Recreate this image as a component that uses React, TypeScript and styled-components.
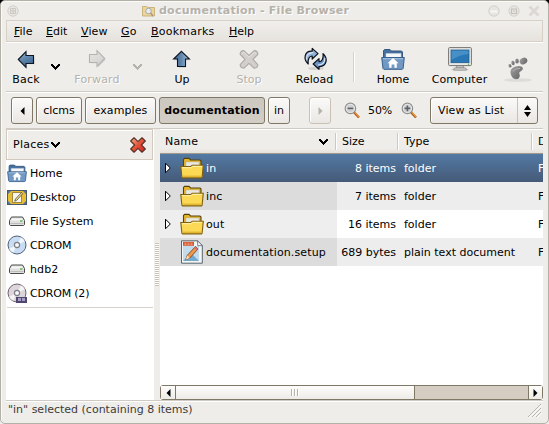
import React from "react";
import styled, { createGlobalStyle, css } from "styled-components";

const Global = createGlobalStyle`
  * { box-sizing: border-box; }
  body { margin: 0; background: linear-gradient(#000 50%, #efedea 50%) fixed; overflow: hidden; }
`;

const Window = styled.div`
  width: 549px;
  height: 424px;
  display: flex;
  flex-direction: column;
  padding: 0 5px;
  background: #efedea;
  border: 1px solid #b3b0a8;
  border-radius: 5px;
  box-shadow: inset 1px 1px 0 #fbfaf8;
  font: 11px/14px "DejaVu Sans", sans-serif;
  color: #000;
  white-space: nowrap;
  cursor: default;
`;

const Label = styled.span<{ $track?: number; $dim?: boolean; $bold?: boolean; $drop?: number }>`
  display: block;
  padding-top: ${(p) => p.$drop ?? 0}px;
  letter-spacing: ${(p) => p.$track ?? 0}px;
  ${(p) => p.$bold && css`font-weight: bold;`}
  ${(p) => p.$dim && css`color: #b5b2aa; text-shadow: 1px 1px 0 #fff;`}
`;

const TitleBar = styled.header`
  flex: 0 0 19px;
  display: flex;
  align-items: center;
  padding: 0 3px 0 1px;
`;
const TitleCaption = styled.div`
  flex: 1;
  display: flex;
  align-items: center;
  gap: 4px;
  padding-left: 123px;
`;
const WindowButtons = styled.div`
  display: flex;
  gap: 8px;
`;

const MenuBar = styled.nav`
  flex: 0 0 22px;
  display: flex;
  align-items: center;
  padding: 2px 0 0 7px;
  border: 1px solid #d6d0c6;
  background: linear-gradient(#f1efec, #e6e3de);
`;
const MenuItem = styled.span<{ $width: number; $track?: number }>`
  display: block;
  width: ${(p) => p.$width}px;
  letter-spacing: ${(p) => p.$track ?? 0}px;
  &::first-letter { text-decoration: underline; text-underline-offset: 1px; }
`;

const Toolbar = styled.div`
  flex: 0 0 50px;
  display: grid;
  grid-template-columns: 40px 19px 64px 16px 74px 60px 71px 8px 70px 63px 52px;
  border-top: 1px solid #fff;
  border-bottom: 1px solid #cfcbc4;
`;
const ToolItem = styled.div`
  display: flex;
  flex-direction: column;
  align-items: center;
  padding-top: 4px;
  gap: 2px;
  svg { display: block; flex: none; }
`;
const ToolArrow = styled.div`
  display: flex;
  justify-content: center;
  padding-top: 21px;
`;
const ToolRule = styled.div`
  width: 2px;
  height: 30px;
  margin: 9px 0 0 3px;
  background: #d5d1ca;
  border-right: 1px solid #fff;
`;
const Foot = styled.div`
  padding: 13px 0 0 11px;
`;

const LocationBar = styled.div`
  flex: 0 0 37px;
  display: flex;
  align-items: flex-start;
  gap: 3px;
  padding: 4px 0 0 5px;
  border-top: 1px solid #fff;
  border-bottom: 1px solid #cfcbc4;
`;
const PathButton = styled.button<{ $width: number; $active?: boolean; $faded?: boolean }>`
  width: ${(p) => p.$width}px;
  height: 27px;
  display: flex;
  align-items: center;
  justify-content: center;
  padding: 0;
  font: inherit;
  color: inherit;
  border: 1px solid ${(p) => (p.$faded ? "#c9c1b6" : "#7f7866")};
  border-radius: 3px;
  background: ${(p) => (p.$active ? "linear-gradient(#cdc8bf, #d3cec5)" : "linear-gradient(#fbfaf9, #eae7e3)")};
  box-shadow: ${(p) => (p.$active ? "none" : "inset 1px 1px 0 #fff")};
`;
const NextButton = styled(PathButton)`
  margin-left: 16px;
`;
const ZoomGroup = styled.div`
  height: 27px;
  display: grid;
  grid-template-columns: 24px 33px 20px;
  align-items: center;
  margin-left: 10px;
`;
const Combo = styled.div`
  width: 108px;
  height: 27px;
  display: grid;
  grid-template-columns: 1fr 20px;
  align-items: center;
  margin-left: 6px;
  padding-left: 7px;
  border: 1px solid #7f7866;
  border-radius: 3px;
  background: linear-gradient(#fbfaf9, #eae7e3);
  box-shadow: inset 1px 1px 0 #fff;
`;
const ComboArrows = styled.div`
  height: 25px;
  display: flex;
  align-items: center;
  justify-content: center;
  border-left: 1px solid #c9c1b6;
`;

const Body = styled.main`
  flex: 0 0 272px;
  display: grid;
  grid-template-columns: 148px 6px 383px;
  border-bottom: 1px solid #cfcbc4;
`;
const Sidebar = styled.aside`
  background: #fff;
`;
const SidebarHeader = styled.div`
  width: 147px;
  height: 31px;
  display: flex;
  align-items: center;
  gap: 2px;
  margin-bottom: 1px;
  padding: 1px 6px 0 6px;
  border: 1px solid #d2c9be;
  background: #efedea;
  box-shadow: inset 1px 1px 0 #fff;
  svg:last-child { margin-left: auto; }
`;
const Place = styled.div`
  height: 24px;
  display: grid;
  grid-template-columns: 22px 1fr;
  gap: 1px;
  align-items: center;
  padding-left: 1px;
  svg { display: block; }
`;
const PlaceRule = styled.div`
  height: 1px;
  margin: 2px 1px 0;
  background: #d6d1c8;
`;
const Splitter = styled.div`
  display: flex;
  align-items: center;
  padding: 0 1px;
`;
const Grip = styled.div`
  width: 4px;
  height: 43px;
  background: repeating-linear-gradient(#c9c1b6 0 1px, #fff 1px 2px);
`;

const FileList = styled.section`
  display: flex;
  flex-direction: column;
  overflow: hidden;
  background: #fff;
`;
const Columns = styled.div`
  display: grid;
  grid-template-columns: 177px 62px 134px 10px;
`;
const HeaderRow = styled(Columns)`
  height: 25px;
  border-top: 1px solid #fff;
  border-bottom: 1px solid #a09a8c;
  background: linear-gradient(#efedea 80%, #e4e1dc);
`;
const HeaderCell = styled.div<{ $last?: boolean }>`
  display: flex;
  align-items: center;
  justify-content: space-between;
  padding: 1px 9px 0 5px;
  overflow: hidden;
  background: ${(p) =>
    p.$last ? "none" : "linear-gradient(#cfc8be, #cfc8be) right 1px top 3px / 1px 17px no-repeat, linear-gradient(#fff, #fff) right 0 top 3px / 1px 17px no-repeat"};
`;
const FileRow = styled(Columns)<{ $tone: "selected" | "dark" | "light" }>`
  height: 28px;
  ${(p) => p.$tone === "selected" && css`background: linear-gradient(#5279a3, #465a78); color: #fff;`}
  ${(p) => p.$tone === "dark" && css`background: linear-gradient(90deg, #dcdcdc 177px, #ededed 177px);`}
  ${(p) => p.$tone === "light" && css`background: linear-gradient(90deg, #eeeeee 177px, #fff 177px);`}
`;
const NameCell = styled.div`
  display: grid;
  grid-template-columns: 14px 24px 1fr;
  align-items: center;
  gap: 2px;
  padding-left: 4px;
  svg { display: block; }
`;
const SizeCell = styled.div`
  display: flex;
  align-items: center;
  justify-content: flex-end;
  padding: 2px 3px 0 0;
`;
const TextCell = styled.div`
  display: flex;
  align-items: center;
  padding: 2px 0 0 5px;
  overflow: hidden;
`;

const ScrollBar = styled.div`
  height: 15px;
  margin-top: auto;
  display: grid;
  grid-template-columns: 14px 240px 1fr 14px;
  border: 1px solid #7f7866;
  border-radius: 3px;
  background: #d5ccc2;
`;
const ScrollPart = styled.div<{ $ends?: boolean; $last?: boolean }>`
  display: flex;
  align-items: center;
  justify-content: center;
  background: linear-gradient(#fdfdfb, #edebe7);
  ${(p) => p.$ends && css`border: solid #7f7866; border-width: 0 1px;`}
  ${(p) => p.$last && css`border-left: 1px solid #7f7866;`}
`;
const Trough = styled.div`
  background: #d5ccc2;
`;
const StatusBar = styled.footer`
  flex: 1;
  display: flex;
  justify-content: space-between;
  padding: 1px 1px 0 2px;
  border-top: 1px solid #fff;
  color: #3c3b39;
`;

function Chevron({ color = "#000" }: { color?: string }) {
  return (
    <svg width="9" height="6" viewBox="0 0 9 6" shapeRendering="crispEdges">
      <path d="M0 0h2v1h1v1h1v1h1V2h1V1h1V0h2v2H8v1H7v1H6v1H5v1H4V5H3V4H2V3H1V2H0z" fill={color} />
    </svg>
  );
}

function Triangle({ side, color = "#000" }: { side: "left" | "right"; color?: string }) {
  return (
    <svg width="5" height="8" viewBox="0 0 5 8">
      <path d={side === "left" ? "M4.5 0v8L.5 4z" : "M.5 0v8l4-4z"} fill={color} />
    </svg>
  );
}

function BlueArrow({ kind }: { kind: "back" | "forward" | "up" }) {
  const turn = kind === "up" ? "rotate(90 12 12)" : kind === "forward" ? "rotate(180 12 12)" : undefined;
  const off = kind === "forward";
  return (
    <svg width="24" height="24" viewBox="0 0 24 24">
      <defs>
        <linearGradient id={"arrow-" + kind} x1="0" y1="0" x2={kind === "up" ? "0" : ".5"} y2="1">
          <stop offset="0" stopColor={off ? "#d0cfcd" : "#a9c3dc"} />
          <stop offset=".5" stopColor={off ? "#d9d8d6" : "#6288ae"} />
          <stop offset="1" stopColor={off ? "#e4e3e0" : "#3d6691"} />
        </linearGradient>
      </defs>
      <g transform="translate(1 1.3)" opacity=".5">
        <path d="M4.5 12.5l7.5-7.5V9h7.5v7H12v4z" fill="#b9b6b0" transform={turn} />
      </g>
      <path d="M4.3 12.5L12 4.6V8.5h7.5v8H12v3.9z" fill={`url(#arrow-${kind})`} stroke={off ? "#b5b3af" : "#0d1620"} strokeWidth="1.1" transform={turn} />
    </svg>
  );
}

function StopIcon() {
  return (
    <svg width="24" height="24" viewBox="0 0 24 24">
      <g transform="translate(1.2 1.6) scale(.9)">
        <path d="M6.2 2.2L12 7.6l5.8-5.4q4 .2 4 4.1L16.4 12l5.4 5.8q0 3.8-4 4L12 16.4l-5.8 5.4q-4-.2-4-4L7.6 12 2.2 6.3q0-3.9 4-4.1z" fill="#d3cfcc" stroke="#aeaaa6" strokeWidth="1.3" strokeLinejoin="round" />
        <path d="M4 6.2L6.2 4 12 9.4 17.8 4l2.2 2" fill="none" stroke="#e6e3e0" />
      </g>
    </svg>
  );
}

function ReloadIcon() {
  return (
    <svg width="24" height="24" viewBox="0 0 24 24">
      <ellipse cx="13" cy="21.5" rx="8" ry="1.6" fill="#d5d2cd" />
      {[0, 180].map((angle) => (
        <g key={angle} transform={`translate(.6 -.2) rotate(${angle} 12 12)`}>
          <path d="M4.6 17.2C-.6 12.6.6 3.8 8.6 4.3V1.6l5.8 5.2-5.8 5.4V9.2c-3-.2-4.6 3.4-4 8z" fill={angle ? "#6f95c4" : "#8fb0d8"} stroke="#0b1219" strokeWidth="1.2" strokeLinejoin="round" />
          <path d="M2.8 12.8C2.6 8.4 5 5.6 9.6 5.8" fill="none" stroke="#dce8f5" strokeWidth="1.1" />
        </g>
      ))}
    </svg>
  );
}

function HomeFolder({ size }: { size: number }) {
  return (
    <svg width={size} height={size} viewBox="0 0 24 24">
      <path d="M2.5 12V3.5l1-1H9l1.5 1.5h10l1 1V12z" fill="#456f9f" stroke="#36597f" />
      <path d="M5 6.5h15V12H5z" fill="#f6f7f8" stroke="#c4ced8" strokeWidth=".6" />
      <path d="M.7 10.5h22.6l-1.2 11-.8.8H2.8l-.8-.8z" fill="#7199c3" stroke="#365f8d" />
      <path d="M2 11.7h20" stroke="#a9c4e0" />
      <path d="M12 11l-5.5 5.2h1.7v4.6h2.4v-3.3h2.8v3.3h2.4v-4.6h1.7z" fill="#fff" />
    </svg>
  );
}

function ComputerIcon() {
  return (
    <svg width="24" height="24" viewBox="0 0 24 24">
      <ellipse cx="12" cy="22.4" rx="9" ry="1.4" fill="#cfccc8" />
      <path d="M9 18h6l1 3H8z" fill="#c6c6c4" stroke="#888886" strokeWidth=".7" />
      <path d="M6.5 21h11l1 2h-13z" fill="#e2e2e0" stroke="#868684" strokeWidth=".8" />
      <rect x=".6" y=".6" width="22.8" height="18" rx="1" fill="#e9e9e7" stroke="#747472" />
      <rect x="3" y="3" width="18" height="12.7" fill="#2878b6" stroke="#1f5b8c" strokeWidth=".8" />
      <path d="M3.5 3.5h17V7Q11 8 3.5 13z" fill="#5b9fd2" opacity=".6" />
      <circle cx="20.5" cy="17.2" r=".7" fill="#57b34a" />
    </svg>
  );
}

function FootIcon() {
  return (
    <svg width="32" height="28" viewBox="0 0 32 28">
      <defs>
        <linearGradient id="foot" x1="0" y1="0" x2="1" y2="1">
          <stop offset="0" stopColor="#a2a2a2" />
          <stop offset="1" stopColor="#606060" />
        </linearGradient>
      </defs>
      <ellipse cx="16" cy="24" rx="14" ry="1.8" fill="#dedcd9" />
      <g fill="url(#foot)">
        <ellipse cx="21.5" cy="5" rx="4" ry="3.1" transform="rotate(-30 21.5 5)" />
        <ellipse cx="15" cy="5" rx="1.8" ry="2.6" />
        <ellipse cx="11" cy="7" rx="1.6" ry="2.2" transform="rotate(-15 11 7)" />
        <ellipse cx="8" cy="9.8" rx="1.4" ry="1.8" transform="rotate(-25 8 9.8)" />
        <path d="M8.5 16c0-3.6 4-5.9 8.3-6 4.7 0 5.2 3.3 2.4 5.1-2 1.2-2.2 1.7-1.8 2.8.8 1.4.4 4.3-2.1 5.2C11.5 24 8.5 20 8.5 16z" />
      </g>
      <path d="M11 15.5c1-2.3 4-3 7-3" stroke="#b5b5b5" fill="none" />
    </svg>
  );
}

function Magnifier({ sign }: { sign: "+" | "-" }) {
  return (
    <svg width="17" height="17" viewBox="0 0 17 17">
      <path d="M10 10.2l5 5.3" stroke="#a8541c" strokeWidth="2.4" />
      <path d="M10.6 10.2l4.6 4.9" stroke="#f5a33d" strokeWidth="1.1" />
      <circle cx="6.4" cy="6.4" r="5.2" fill="#cfd1d4" stroke="#8d8d8a" strokeWidth="1.2" />
      <circle cx="6.4" cy="6.4" r="4.1" fill="none" stroke="#ececec" strokeWidth=".8" />
      <path d={sign === "+" ? "M3.6 6.4H9.200M6.4 3.6v5.6" : "M3.6 6.4h5.6"} stroke="#5d6266" strokeWidth="1.6" />
    </svg>
  );
}

function SpinArrows() {
  return (
    <svg width="7" height="12" viewBox="0 0 7 12">
      <path d="M0 5l3.5-5L7 5zM0 7l3.5 5L7 7z" />
    </svg>
  );
}

function CloseCross() {
  return (
    <svg width="16" height="16" viewBox="0 0 16 16">
      <defs>
        <linearGradient id="cross" x1="0" y1="0" x2="1" y2="1">
          <stop offset="0" stopColor="#f8b392" />
          <stop offset=".5" stopColor="#e4513a" />
          <stop offset="1" stopColor="#cf1f1f" />
        </linearGradient>
      </defs>
      <path d="M4 .8L8 4.6 12 .8 15.3 4 11.4 8l3.9 4L12 15.2l-4-3.8-4 3.8L.7 12l3.9-4L.7 4z" fill="url(#cross)" stroke="#5b3427" strokeWidth="1.2" strokeLinejoin="round" />
    </svg>
  );
}

function DesktopIcon() {
  return (
    <svg width="20" height="20" viewBox="0 0 20 20">
      <rect x=".5" y="3.5" width="19" height="14" fill="#e8bd35" stroke="#4b5a6b" />
      <path d="M1 4h3L1 7zM19 4h-3l3 3zM1 17h3l-3-3zM19 17h-3l3-3z" fill="#4a74a8" />
      <rect x="5.5" y="5.500" width="9" height="10" fill="#f6f5ef" stroke="#a38a3a" />
      <path d="M14.500 5.5l-6 6.5-.8 2.2 2-.9 6-6.600z" fill="#f6dd8a" stroke="#4f4a3a" strokeWidth=".8" />
    </svg>
  );
}

function DriveIcon() {
  return (
    <svg width="20" height="20" viewBox="0 0 20 20">
      <path d="M2.500 9.5l2-3.500h11l2 3.500v4.2l-1 .8h-13l-1-.8z" fill="#e0e0df" stroke="#4a4a49" strokeLinejoin="round" />
      <path d="M4 9.500l1.200-2h9.600l1.200 2z" fill="#f6f6f5" />
      <path d="M3.500 12.500h13" stroke="#bcbcba" />
      <rect x="13" y="9" width="2.5" height="2" fill="#83bf82" />
    </svg>
  );
}

function DiscIcon({ drive }: { drive?: boolean }) {
  return (
    <svg width="20" height="20" viewBox="0 0 20 20">
      <circle cx="10" cy="10" r="9" fill={drive ? "#dcd5dc" : "#c8dcf3"} stroke={drive ? "#6f6368" : "#4d6076"} />
      <path d="M10 10L14 2.300a8.500 8.500 0 0 1 4 4z" fill="#fff" opacity=".75" />
      <path d="M10 10L6 17.700a8.500 8.500 0 0 1-4-4z" fill="#fff" opacity=".75" />
      <circle cx="10" cy="10" r="2.6" fill="#eef0f2" stroke="#7d7f84" strokeWidth="1.1" />
      <circle cx="10" cy="10" r="1" fill="#fff" />
      {drive && (
        <g shapeRendering="crispEdges">
          <path d="M9 14h11v6H9z" fill="#50486c" />
          <path d="M11 15h3v3h-3zM15 15h3v3h-3z" fill="#a89fc6" />
        </g>
      )}
    </svg>
  );
}

function FolderIcon() {
  return (
    <svg width="24" height="24" viewBox="0 0 24 24">
      <path d="M3.5 12V3.5l1-1.1H9L10.500 4H20l1 1v7z" fill="#e5b428" stroke="#55430f" strokeWidth="1.1" />
      <path d="M6 6h13v6H6z" fill="#f8f8f6" stroke="#bcb48f" strokeWidth=".7" />
      <path d="M7 8h11M6 10h12" stroke="#d8d6cb" />
      <path d="M.8 10.500h10l1.500-1.300h11l-1.200 12-.6.700H2.600l-.7-.7z" fill="#fbd955" stroke="#806113" strokeWidth="1.1" />
      <path d="M2 11.700h9l1.500-1.300h9.500" stroke="#fff2a9" fill="none" />
      <path d="M2.600 20.300h18.800" stroke="#e3b532" strokeWidth="1.500" />
    </svg>
  );
}

function DocumentIcon() {
  return (
    <svg width="24" height="24" viewBox="0 0 24 24">
      <path d="M1.500.8h16l4.800 4.700v17.700H1.500z" fill="#f4f5f6" stroke="#59656f" />
      <path d="M3 6h16v15H3z" fill="#c3dced" />
      <path d="M3 21l8-8 8 8z" fill="#74a9d0" />
      <path d="M17.500.8l.3 4.900h4.500z" fill="#fff" stroke="#59656f" strokeWidth=".8" />
      <path d="M3 1.800h11v4H3z" fill="#d4562e" />
      <path d="M4.500 3.200h8M4.500 4.500h8" stroke="#f0b39c" strokeWidth=".7" strokeDasharray="2 1" />
      <path d="M15.500 6.500L7.200 15.500l-1.400 4.300 4-1.800 8.200-9z" fill="#f0984a" stroke="#7a4520" strokeWidth=".9" />
      <path d="M15.500 6.500l2.500 2.500-1.400 1.600-2.600-2.600z" fill="#d96d73" />
      <path d="M7.200 15.500l2.600 2.500-4 1.800z" fill="#f7e3c5" />
    </svg>
  );
}

function Expander() {
  return (
    <svg width="8" height="12" viewBox="0 0 8 12">
      <path d="M1.500 1.200v9.600L6.300 6z" fill="#fff" stroke="#000" strokeWidth="1" />
    </svg>
  );
}

function FinderIcon() {
  return (
    <svg width="13" height="12" viewBox="0 0 13 12">
      <path d="M.5 11V1.500h4L6 2.500h6.500V11z" fill="#ecd49a" stroke="#cbb47c" />
      <circle cx="6.500" cy="6" r="2.800" fill="#e9ecee" stroke="#a9aaa8" />
      <path d="M8.500 8l2.500 3" stroke="#aa9780" strokeWidth="1.400" />
    </svg>
  );
}

function WindowButton({ kind }: { kind: "menu" | "min" | "max" | "close" }) {
  return (
    <svg width="12" height="12" viewBox="0 0 12 12" fill="none" stroke="#d3d0cb">
      {kind !== "close" && <circle cx="6" cy="6" r="5.2" fill="#e8e6e2" />}
      {kind === "menu" && <path d="M3.500 3.500h5v5h-5zM6 3.500v5M3.500 6h5" stroke="#cbc8c2" />}
      {kind === "min" && <path d="M2.500 6.500h7" stroke="#f8f7f5" strokeWidth="2" />}
      {kind === "max" && <path d="M3.500 4h5v4.500h-5zM5 6h2" stroke="#c3c0ba" strokeWidth="1.200" />}
      {kind === "close" && <path d="M1.500 1.500l9 9M10.500 1.500l-9 9" strokeWidth="2.800" stroke="#dcd9d5" />}
    </svg>
  );
}

function Thumb() {
  return (
    <svg width="8" height="7" viewBox="0 0 8 7" shapeRendering="crispEdges">
      <path d="M0 0h1v7H0zM3 0h1v7H3zM6 0h1v7H6z" fill="#b9b2a6" />
      <path d="M1 0h1v7H1zM4 0h1v7H4zM7 0h1v7H7z" fill="#fff" />
    </svg>
  );
}

function ResizeGrip() {
  return (
    <svg width="15" height="15" viewBox="0 0 15 15">
      <path d="M1 14L14 1M5 14l9-9M9 14l5-5" stroke="#b9b5ad" />
      <path d="M2 14.700L14.700 2M6 14.700L14.700 6M10 14.700l4.700-4.700" stroke="#fff" />
    </svg>
  );
}

const menus = [
  { text: "File", width: 32, track: 0 },
  { text: "Edit", width: 35, track: 0 },
  { text: "View", width: 40, track: 0.1 },
  { text: "Go", width: 30, track: 0.1 },
  { text: "Bookmarks", width: 78, track: 0.22 },
  { text: "Help", width: 40, track: 0 },
];

const places = [
  { name: "Home", icon: <HomeFolder size={20} />, track: 0 },
  { name: "Desktop", icon: <DesktopIcon />, track: 0.05 },
  { name: "File System", icon: <DriveIcon />, track: 0.05 },
  { name: "CDROM", icon: <DiscIcon />, track: -0.1 },
  { name: "hdb2", icon: <DriveIcon />, track: 0.1 },
  { name: "CDROM (2)", icon: <DiscIcon drive />, track: -0.2 },
];

const files = [
  { name: "in", size: "8 items", type: "folder", tone: "selected" as const },
  { name: "inc", size: "7 items", type: "folder", tone: "dark" as const },
  { name: "out", size: "16 items", type: "folder", tone: "light" as const },
  { name: "documentation.setup", size: "689 bytes", type: "plain text document", tone: "dark" as const },
];

export default function App() {
  return (
    <>
      <Global />
      <Window>
        <TitleBar>
          <WindowButton kind="menu" />
          <TitleCaption>
            <FinderIcon />
            <Label $bold $dim $track={0.25}>documentation - File Browser</Label>
          </TitleCaption>
          <WindowButtons>
            <WindowButton kind="min" />
            <WindowButton kind="max" />
            <WindowButton kind="close" />
          </WindowButtons>
        </TitleBar>
        <MenuBar>
          {menus.map((m) => (
            <MenuItem key={m.text} $width={m.width} $track={m.track}>{m.text}</MenuItem>
          ))}
        </MenuBar>
        <Toolbar>
          <ToolItem><BlueArrow kind="back" /><Label $track={0.15}>Back</Label></ToolItem>
          <ToolArrow><Chevron /></ToolArrow>
          <ToolItem><BlueArrow kind="forward" /><Label $dim $track={0.15}>Forward</Label></ToolItem>
          <ToolArrow><Chevron color="#b5b2aa" /></ToolArrow>
          <ToolItem><BlueArrow kind="up" /><Label>Up</Label></ToolItem>
          <ToolItem><StopIcon /><Label $dim>Stop</Label></ToolItem>
          <ToolItem><ReloadIcon /><Label>Reload</Label></ToolItem>
          <ToolRule />
          <ToolItem><HomeFolder size={24} /><Label>Home</Label></ToolItem>
          <ToolItem><ComputerIcon /><Label $track={0.12}>Computer</Label></ToolItem>
          <Foot><FootIcon /></Foot>
        </Toolbar>
        <LocationBar>
          <PathButton $width={22}><Triangle side="left" /></PathButton>
          <PathButton $width={46}><Label>clcms</Label></PathButton>
          <PathButton $width={71}><Label $track={0.1}>examples</Label></PathButton>
          <PathButton $width={106} $active><Label $bold $track={0.15}>documentation</Label></PathButton>
          <PathButton $width={22}><Label>in</Label></PathButton>
          <NextButton $width={22} $faded><Triangle side="right" color="#b5b2aa" /></NextButton>
          <ZoomGroup>
            <Magnifier sign="-" />
            <Label $track={-0.1}>50%</Label>
            <Magnifier sign="+" />
          </ZoomGroup>
          <Combo>
            <Label $track={0.12}>View as List</Label>
            <ComboArrows><SpinArrows /></ComboArrows>
          </Combo>
        </LocationBar>
        <Body>
          <Sidebar>
            <SidebarHeader>
              <Label $track={0.25}>Places</Label>
              <Chevron />
              <CloseCross />
            </SidebarHeader>
            {places.map((p) => (
              <Place key={p.name}>
                {p.icon}
                <Label $drop={2} $track={p.track}>{p.name}</Label>
              </Place>
            ))}
            <PlaceRule />
          </Sidebar>
          <Splitter><Grip /></Splitter>
          <FileList>
            <HeaderRow>
              <HeaderCell><Label $track={0.2}>Name</Label><Chevron /></HeaderCell>
              <HeaderCell><Label>Size</Label></HeaderCell>
              <HeaderCell><Label>Type</Label></HeaderCell>
              <HeaderCell $last><Label>D</Label></HeaderCell>
            </HeaderRow>
            {files.map((f) => (
              <FileRow key={f.name} $tone={f.tone}>
                <NameCell>
                  {f.type === "folder" ? <Expander /> : <span />}
                  {f.type === "folder" ? <FolderIcon /> : <DocumentIcon />}
                  <Label $drop={2} $track={0.12}>{f.name}</Label>
                </NameCell>
                <SizeCell><Label>{f.size}</Label></SizeCell>
                <TextCell><Label>{f.type}</Label></TextCell>
                <TextCell><Label>F</Label></TextCell>
              </FileRow>
            ))}
            <ScrollBar>
              <ScrollPart><Triangle side="left" /></ScrollPart>
              <ScrollPart $ends><Thumb /></ScrollPart>
              <Trough />
              <ScrollPart $last><Triangle side="right" /></ScrollPart>
            </ScrollBar>
          </FileList>
        </Body>
        <StatusBar>
          <Label>"in" selected (containing 8 items)</Label>
          <ResizeGrip />
        </StatusBar>
      </Window>
    </>
  );
}
